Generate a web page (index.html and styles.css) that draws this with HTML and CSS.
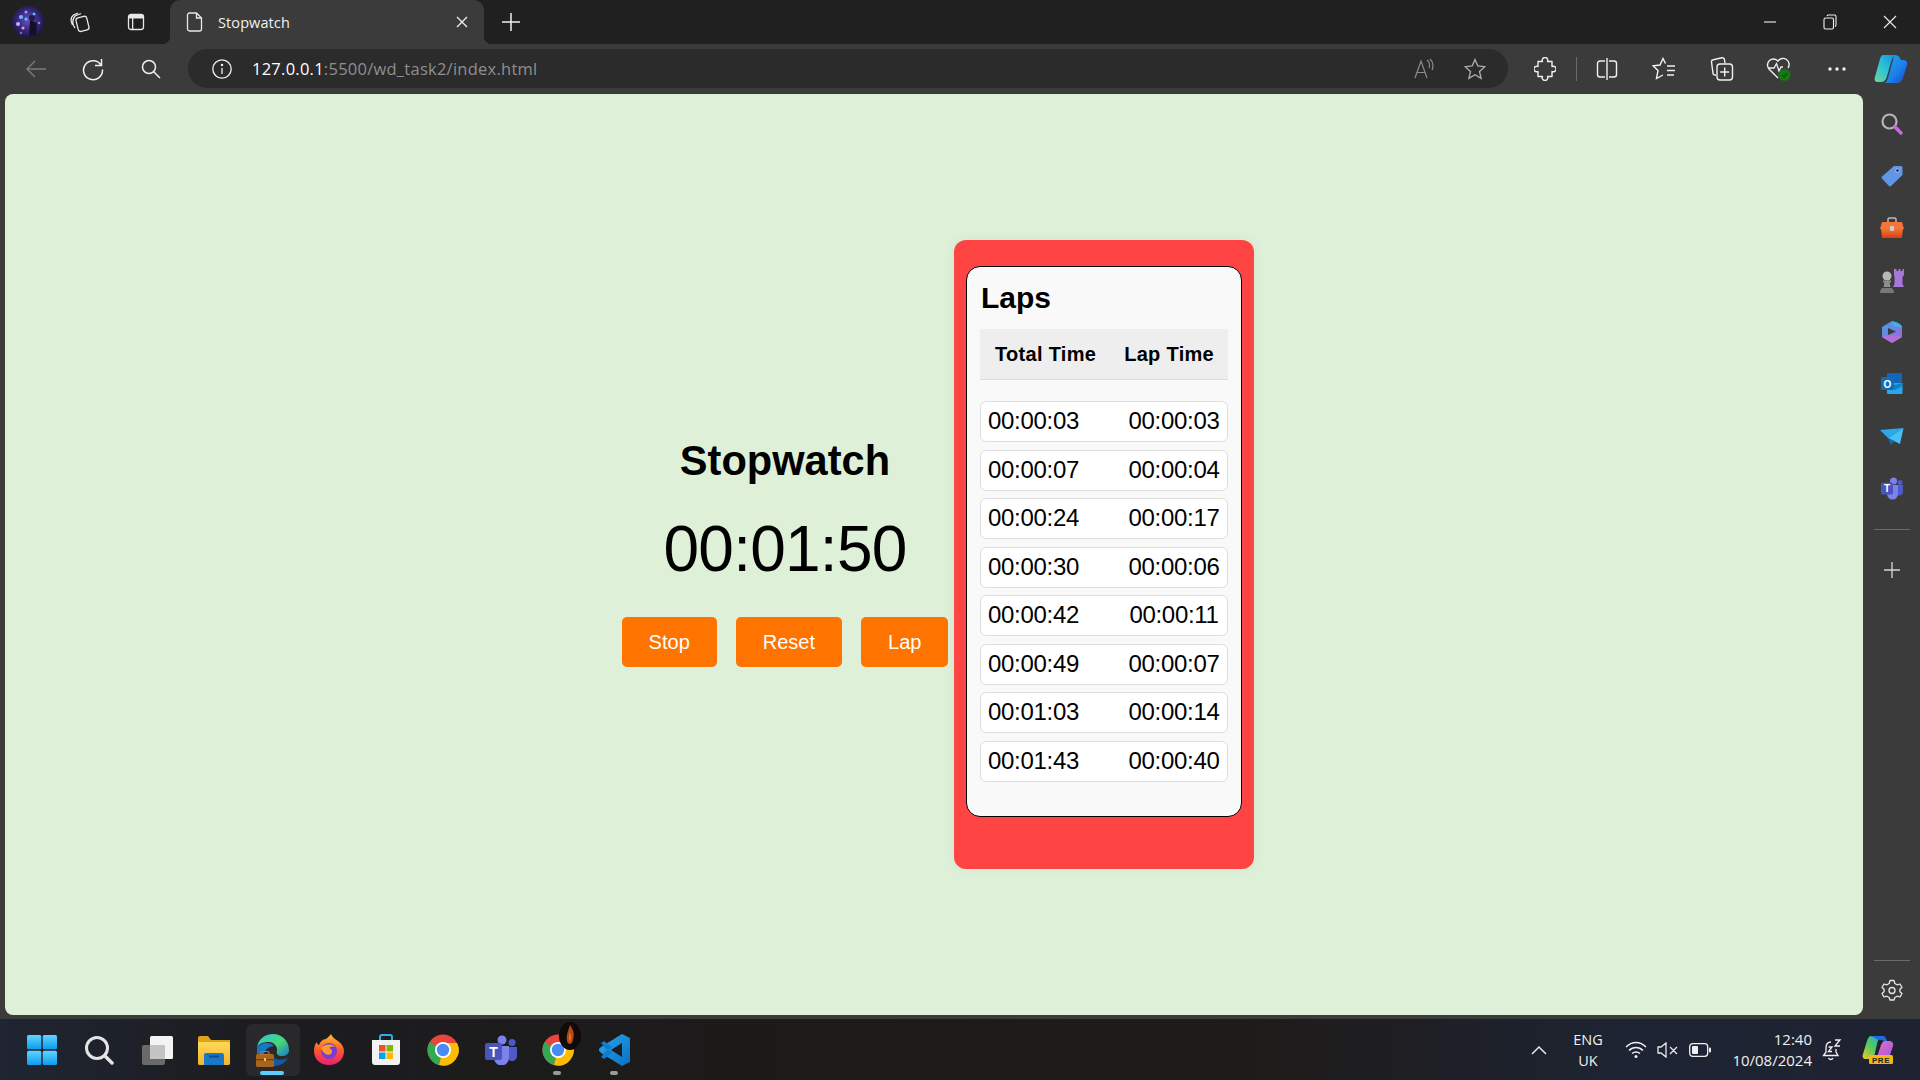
FILE: index.html
```html
<!DOCTYPE html>
<html lang="en">
<head>
<meta charset="utf-8">
<title>Stopwatch</title>
<link rel="stylesheet" href="styles.css">
</head>
<body>
<svg class="defs" width="0" height="0" aria-hidden="true">
  <defs>
    <linearGradient id="gCopA" x1="0" y1="0" x2="1" y2="1"><stop offset="0" stop-color="#1fa8f0"/><stop offset=".6" stop-color="#1b80e8"/><stop offset="1" stop-color="#1c3fc4"/></linearGradient>
    <linearGradient id="gCopB" x1="0" y1="1" x2="1" y2="0"><stop offset="0" stop-color="#6fd898"/><stop offset=".5" stop-color="#2cc0d8"/><stop offset="1" stop-color="#0f90e0"/></linearGradient>
    <linearGradient id="gCopP" x1="0" y1="0" x2="1" y2="1"><stop offset="0" stop-color="#f06ab8"/><stop offset="1" stop-color="#9a5be8"/></linearGradient>
    <linearGradient id="gCopG" x1="0" y1="1" x2="1" y2="0"><stop offset="0" stop-color="#f0c830"/><stop offset=".5" stop-color="#4fc860"/><stop offset="1" stop-color="#20a8e8"/></linearGradient>
    <linearGradient id="gWin" x1="0" y1="0" x2="0" y2="1"><stop offset="0" stop-color="#5fd6ff"/><stop offset="1" stop-color="#0f9af0"/></linearGradient>
    <linearGradient id="gEdge" x1="0" y1="0" x2="1" y2="1"><stop offset="0" stop-color="#36c0d8"/><stop offset=".55" stop-color="#46d878"/><stop offset="1" stop-color="#1a78c8"/></linearGradient>
    <linearGradient id="gFox" x1="0" y1="0" x2="0" y2="1"><stop offset="0" stop-color="#ffc02c"/><stop offset=".5" stop-color="#ff5a2c"/><stop offset="1" stop-color="#e81f70"/></linearGradient>
    <linearGradient id="gFold" x1="0" y1="0" x2="0" y2="1"><stop offset="0" stop-color="#ffd75a"/><stop offset="1" stop-color="#f2b528"/></linearGradient>
    <linearGradient id="gVs" x1="0" y1="0" x2="1" y2="1"><stop offset="0" stop-color="#2aa8ee"/><stop offset="1" stop-color="#0a70c0"/></linearGradient>
    <linearGradient id="gTool" x1="0" y1="0" x2="0" y2="1"><stop offset="0" stop-color="#f4743a"/><stop offset="1" stop-color="#d8400e"/></linearGradient>
    <linearGradient id="gM365" x1="0" y1="0" x2="1" y2="1"><stop offset="0" stop-color="#3fa0e8"/><stop offset="1" stop-color="#a860d8"/></linearGradient>
    <radialGradient id="gAv" cx=".5" cy=".45" r=".6"><stop offset="0" stop-color="#6a50c8"/><stop offset=".55" stop-color="#33287a"/><stop offset="1" stop-color="#18122e"/></radialGradient>
  </defs>
</svg>

<div class="window">
  <header class="titlebar">
    <div class="slot w56">
      <svg class="ic" width="32" height="32" viewBox="0 0 32 32"><circle cx="16" cy="16" r="16" fill="url(#gAv)"/><circle cx="9" cy="11" r="2" fill="#7fb0ff"/><circle cx="14" cy="6" r="1.500" fill="#d080e8"/><circle cx="6" cy="18" r="2" fill="#c8b0ff"/><circle cx="11" cy="22" r="1.500" fill="#e0a0d0"/><circle cx="22" cy="8" r="1.500" fill="#60c0e0"/><circle cx="9" cy="27" r="1.300" fill="#8060d0"/><circle cx="14" cy="13" r="1.500" fill="#50d0f0"/><circle cx="27" cy="17" r="1.300" fill="#9080e8"/><path d="M18 14 L25 17 L24 29 L17 30 Z" fill="#151028"/><circle cx="20" cy="12" r="3" fill="#231a48"/></svg>
    </div>
    <div class="slot w48">
      <svg class="ic" width="22" height="22" viewBox="0 0 22 22" fill="none" stroke="#e8e8e8" stroke-width="1.300"><rect x="8" y="6" width="11" height="14" rx="2.500" transform="rotate(-14 13 13)"/><path d="M6 17 C3 13 3 9 6 5 L12 2.500 M3.500 14 C1.500 10 2 6 4.500 4 L9 2"/></svg>
    </div>
    <div class="slot w63">
      <svg class="ic" width="20" height="20" viewBox="0 0 20 20"><rect x="2.500" y="2.500" width="15" height="15" rx="2.500" fill="none" stroke="#e8e8e8" stroke-width="1.300"/><path d="M2.500 5 a2.500 2.500 0 0 1 2.500-2.500 h10 a2.500 2.500 0 0 1 2.500 2.500 v1.500 h-15z M6 6 h1.300 v11 h-1.300z" fill="#e8e8e8"/></svg>
    </div>
    <div class="tab">
      <svg class="ic" width="18" height="20" viewBox="0 0 18 20" fill="none" stroke="#e8e8e8" stroke-width="1.300"><path d="M3.500 1 h7 l5 5 v11 a2 2 0 0 1-2 2 h-10 a2 2 0 0 1-2-2 v-14 a2 2 0 0 1 2-2z M10.500 1 v5 h5"/></svg>
      <span class="tab-title">Stopwatch</span>
      <svg class="ic" width="12" height="12" viewBox="0 0 12 12" stroke="#f0f0f0" stroke-width="1.300"><path d="M1 1 L11 11 M11 1 L1 11"/></svg>
    </div>
    <svg class="ic newtab" width="20" height="20" viewBox="0 0 20 20" stroke="#f0f0f0" stroke-width="1.500"><path d="M10 1 V19 M1 10 H19"/></svg>
    <div class="winctl">
      <div class="slot w60"><svg class="ic" width="14" height="14" viewBox="0 0 14 14" stroke="#f0f0f0" stroke-width="1.100"><path d="M1 7 H13"/></svg></div>
      <div class="slot w60"><svg class="ic" width="14" height="16" viewBox="0 0 14 16" fill="none" stroke="#f0f0f0" stroke-width="1.100"><rect x="1" y="4" width="9.500" height="11" rx="1.500"/><path d="M4 2 a1.500 1.500 0 0 1 1.500-1 h6 a1.500 1.500 0 0 1 1.500 1.500 v8.500 a1.500 1.500 0 0 1-1 1.400"/></svg></div>
      <div class="slot w60"><svg class="ic" width="14" height="14" viewBox="0 0 14 14" stroke="#f0f0f0" stroke-width="1.100"><path d="M1 1 L13 13 M13 1 L1 13"/></svg></div>
    </div>
  </header>

  <nav class="toolbar">
    <div class="slot w57">
      <svg class="ic" width="22" height="20" viewBox="0 0 22 20" fill="none" stroke="#7b7b7b" stroke-width="1.400"><path d="M21 10 H2 M10 2 L2 10 L10 18"/></svg>
    </div>
    <div class="slot w57">
      <svg class="ic" width="24" height="24" viewBox="0 0 24 24" fill="none" stroke="#f0f0f0" stroke-width="1.500"><path d="M20 8 A9.500 9.500 0 1 0 21.500 12.500 M20.500 2 V8.500 H14"/></svg>
    </div>
    <div class="slot w57">
      <svg class="ic" width="20" height="20" viewBox="0 0 20 20" fill="none" stroke="#f0f0f0" stroke-width="1.500"><circle cx="8" cy="8" r="6.500"/><path d="M12.500 12.500 L19 19"/></svg>
    </div>
    <div class="address">
      <svg class="ic" width="20" height="20" viewBox="0 0 20 20" fill="none" stroke="#f0f0f0" stroke-width="1.300"><circle cx="10" cy="10" r="9.200"/><path d="M10 9 V15"/><circle cx="10" cy="6" r=".6" fill="#f0f0f0"/></svg>
      <span class="url"><span class="host">127.0.0.1</span>:5500/wd_task2/index.html</span>
      <svg class="ic" width="22" height="22" viewBox="0 0 22 22" fill="none" stroke="#8c8c8c" stroke-width="1.200"><path d="M2 20 L8 3 L14 20 M4 14.500 H12 M14 2 C17 4 17 8 16 10 M17 1 C20.500 4 20.500 9 19 12"/></svg>
      <svg class="ic" width="22" height="22" viewBox="0 0 22 22" fill="none" stroke="#b0b0b0" stroke-width="1.300"><path d="M11 1.500 L13.800 8 L20.800 8.700 L15.500 13.400 L17.100 20.300 L11 16.700 L4.900 20.300 L6.500 13.400 L1.200 8.700 L8.200 8Z"/></svg>
    </div>
    <div class="tools">
      <div class="slot w57">
        <svg class="ic" width="22" height="24" viewBox="0 0 22 24" fill="none" stroke="#f0f0f0" stroke-width="1.400" stroke-linejoin="round"><path d="M8.500 4.500 a2.800 2.800 0 1 1 5 0 H18 V9.500 a2.800 2.800 0 1 1 0 5 V19.500 H13.500 a2.800 2.800 0 1 1-5 0 H4 V14.500 a2.800 2.800 0 1 1 0-5 V4.500Z"/></svg>
      </div>
      <span class="tool-sep"></span>
      <div class="slot w57">
        <svg class="ic" width="22" height="24" viewBox="0 0 22 24" fill="none" stroke="#f0f0f0" stroke-width="1.400"><path d="M9 4 H4 a2.500 2.500 0 0 0-2.500 2.500 v11 A2.500 2.500 0 0 0 4 20 h5 M13 4 h5 a2.500 2.500 0 0 1 2.500 2.500 v11 a2.500 2.500 0 0 1-2.500 2.500 h-5 M11 1 V23"/></svg>
      </div>
      <div class="slot w57">
        <svg class="ic" width="24" height="24" viewBox="0 0 24 24" fill="none" stroke="#f0f0f0" stroke-width="1.400"><path d="M13.500 6.500 L11 1.500 L8 8 L1 8.800 L6 13.500 L4.500 21.500 L11 18 M15 9 H23 M15 13.500 H23 M15 18 H22"/></svg>
      </div>
      <div class="slot w57">
        <svg class="ic" width="24" height="26" viewBox="0 0 24 26" fill="none" stroke="#f0f0f0" stroke-width="1.400"><path d="M6 19 H5 a2 2 0 0 1-2-1.700 L1.500 6 a2 2 0 0 1 1.700-2.300 L12 1.800 a2 2 0 0 1 2.400 1.700 L15 7"/><rect x="7" y="8" width="15.500" height="16" rx="3"/><path d="M14.700 11.500 V20.500 M10.200 16 H19.200"/></svg>
      </div>
      <div class="slot w57">
        <svg class="ic" width="26" height="26" viewBox="0 0 26 26"><path d="M12 22 L3 13 a6 6 0 0 1 9-8 a6 6 0 0 1 10 7" fill="none" stroke="#f0f0f0" stroke-width="1.400"/><path d="M3 12 H8 L10.500 7.500 L13 15 L15 11 H17" fill="none" stroke="#f0f0f0" stroke-width="1.300"/><circle cx="18.500" cy="19" r="6" fill="#107c10"/><path d="M16 19 L18 21 L21 17.500" fill="none" stroke="#0c4f0c" stroke-width="1.300"/></svg>
      </div>
      <div class="slot w57">
        <svg class="ic" width="18" height="4" viewBox="0 0 18 4" fill="#f0f0f0"><circle cx="2" cy="2" r="1.700"/><circle cx="9" cy="2" r="1.700"/><circle cx="16" cy="2" r="1.700"/></svg>
      </div>
      <div class="slot w57 copilot-slot">
        <svg class="ic" width="34" height="30" viewBox="0 0 34 30"><path d="M20 1 C24 1 26 3 27 6 H29 C32 6 34 8 33 11 L29 24 C28 27 26 29 23 29 H9 C12 29 13 27 14 24 L19 6Z" fill="url(#gCopA)"/><path d="M9 1 H22 C19 2 18 5 17 8 L13 22 C12 26 10 28 7 28 H4 C1 28 0 26 1 23 L6 5 C7 2 8 1 9 1Z" fill="url(#gCopB)"/></svg>
      </div>
    </div>
  </nav>

  <div class="middle">
    <main class="page">
      <section class="stopwatch">
        <h1 class="sw-title">Stopwatch</h1>
        <div class="sw-time">00:01:50</div>
        <div class="sw-buttons">
          <button class="btn">Stop</button>
          <button class="btn">Reset</button>
          <button class="btn">Lap</button>
        </div>
      </section>
      <section class="panel">
        <div class="card">
          <h2 class="laps-title">Laps</h2>
          <div class="laps-head"><span class="head-total">Total Time</span><span class="head-lap">Lap Time</span></div>
          <div class="laps-list">
            <div class="lap-row"><span>00:00:03</span><span class="lap-cell">00:00:03</span></div>
            <div class="lap-row"><span>00:00:07</span><span class="lap-cell">00:00:04</span></div>
            <div class="lap-row"><span>00:00:24</span><span class="lap-cell">00:00:17</span></div>
            <div class="lap-row"><span>00:00:30</span><span class="lap-cell">00:00:06</span></div>
            <div class="lap-row"><span>00:00:42</span><span class="lap-cell">00:00:11</span></div>
            <div class="lap-row"><span>00:00:49</span><span class="lap-cell">00:00:07</span></div>
            <div class="lap-row"><span>00:01:03</span><span class="lap-cell">00:00:14</span></div>
            <div class="lap-row"><span>00:01:43</span><span class="lap-cell">00:00:40</span></div>
          </div>
        </div>
      </section>
    </main>
    <aside class="sidebar">
      <div class="side-icon"><svg class="ic" width="24" height="24" viewBox="0 0 24 24" fill="none"><circle cx="9.500" cy="9.500" r="7" stroke="#b4b4b4" stroke-width="2.200"/><path d="M15 15 L21 21" stroke="#c070d8" stroke-width="3.500" stroke-linecap="round"/></svg></div>
      <div class="side-icon"><svg class="ic" width="24" height="24" viewBox="0 0 24 24"><path d="M14 2 H21 a1.500 1.500 0 0 1 1.500 1.500 V11 L11 22 a1.500 1.500 0 0 1-2 0 L2 14.500 a1.500 1.500 0 0 1 0-2z" fill="#5f96e8"/><circle cx="17.500" cy="6.500" r="1.800" fill="#1e2a50" stroke="#dde" stroke-width=".7"/></svg></div>
      <div class="side-icon"><svg class="ic" width="26" height="24" viewBox="0 0 26 24"><path d="M9 6 V3.500 a1.500 1.500 0 0 1 1.500-1.500 h5 a1.500 1.500 0 0 1 1.500 1.500 V6" fill="none" stroke="#bbb" stroke-width="1.500"/><path d="M3 6 H23 L25 13 H1Z" fill="#f4743a"/><path d="M2 13 H24 L23 21 a1 1 0 0 1-1 1 H4 a1 1 0 0 1-1-1Z" fill="url(#gTool)"/><rect x="11" y="10" width="4" height="5" rx="1" fill="#ccc"/></svg></div>
      <div class="side-icon"><svg class="ic" width="26" height="26" viewBox="0 0 26 26"><path d="M15 2 h2.500 v2 h2 V2 h2 v2 h2 V2 H25 v6 l-1.500 2 V17 L25 20 H14 L15.500 17 V10 L15 8Z" fill="#a877d8"/><circle cx="8" cy="9" r="4.500" fill="#b8b8b8"/><path d="M4 13.500 H12 V15.500 H10.500 L11.500 20 H4.500 L5.500 15.500 H4Z" fill="#8f8f8f"/><path d="M1 26 C1 22 3 21 4 21 H12 C13 21 15 22 15 26Z" fill="#777"/></svg></div>
      <div class="side-icon"><svg class="ic" width="24" height="24" viewBox="0 0 24 24"><path d="M12 1 L22 6 V17 L12 23 L2 17 V7Z" fill="url(#gM365)"/><path d="M12 1 C17 2 22 4 22 8 L13 6Z" fill="#40b0e8"/><path d="M2 17 C6 15 16 15 22 17 L12 23Z" fill="#b070d8"/><path d="M8 8 L16 11.500 L8 15Z" fill="#3b3b3b"/></svg></div>
      <div class="side-icon"><svg class="ic" width="24" height="24" viewBox="0 0 24 24"><rect x="7" y="1" width="15" height="11" rx="1" fill="#1066b8"/><path d="M7 11 H22.500 V21 a1 1 0 0 1-1 1 H8 a1 1 0 0 1-1-1Z" fill="#28a8ea"/><path d="M10 14 L22.500 11 V14 L15 18Z" fill="#0f80c8"/><rect x="1" y="5" width="13" height="13" rx="1" fill="#0f6cbd"/><text class="logo-letter" x="7.500" y="15.500" text-anchor="middle">O</text></svg></div>
      <div class="side-icon"><svg class="ic" width="24" height="22" viewBox="0 0 24 22"><path d="M0 5 L23.500 3 L8 13Z" fill="#2aa8ee"/><path d="M8 13 L23.500 3 L20 19 Z" fill="#48c0f4"/><path d="M8 13 L11 20 L14 16Z" fill="#0c70c0"/></svg></div>
      <div class="side-icon"><svg class="ic" width="24" height="24" viewBox="0 0 24 24"><circle cx="13.500" cy="5" r="3.500" fill="#7b83eb"/><circle cx="20" cy="6.500" r="2.500" fill="#5059c9"/><path d="M15 9 H23 V16 a4 4 0 0 1-6 3Z" fill="#5059c9"/><path d="M7 9 H18 V18 a5.500 5.500 0 0 1-11 0Z" fill="#7b83eb"/><rect x="1" y="6.500" width="12" height="12" rx="1.500" fill="#4b53bc"/><text class="logo-letter" x="7" y="16.300" text-anchor="middle">T</text></svg></div>
      <span class="side-sep"></span>
      <div class="side-icon plus"><svg class="ic" width="16" height="16" viewBox="0 0 16 16" stroke="#d8d8d8" stroke-width="1.300"><path d="M8 0 V16 M0 8 H16"/></svg></div>
      <span class="side-sep bottom"></span>
      <div class="side-icon gear"><svg class="ic" width="22" height="22" viewBox="0 0 22 22" fill="none" stroke="#e8e8e8" stroke-width="1.300"><path d="M9 1.500 H13 L13.800 4.500 L16.200 5.800 L19 5 L21 8.500 L18.900 10.200 V12.800 L21 14.500 L19 18 L16.200 17.200 L13.800 18.500 L13 21 H9 L8.200 18.500 L5.800 17.200 L3 18 L1 14.500 L3.100 12.800 V10.200 L1 8.500 L3 5 L5.800 5.800 L8.200 4.500Z" stroke-linejoin="round"/><circle cx="11" cy="11.500" r="3"/></svg></div>
    </aside>
  </div>

  <footer class="taskbar">
    <div class="pinned">
      <div class="task"><svg class="ic" width="30" height="30" viewBox="0 0 30 30" fill="url(#gWin)"><rect x="0" y="0" width="14.300" height="14.300" rx="1.500"/><rect x="15.700" y="0" width="14.300" height="14.300" rx="1.500"/><rect x="0" y="15.700" width="14.300" height="14.300" rx="1.500"/><rect x="15.700" y="15.700" width="14.300" height="14.300" rx="1.500"/></svg></div>
      <div class="task"><svg class="ic" width="30" height="30" viewBox="0 0 30 30" fill="none" stroke="#e4e4e4"><circle cx="13" cy="13" r="10.500" stroke-width="3"/><path d="M21 21 L28 28" stroke-width="3.500" stroke-linecap="round"/></svg></div>
      <div class="task"><svg class="ic" width="32" height="30" viewBox="0 0 32 30"><rect x="1" y="10" width="23" height="20" rx="2" fill="#6a6a6a"/><rect x="9" y="1" width="23" height="23" rx="1.500" fill="#f4f4f4"/><rect x="9" y="10" width="15" height="14" fill="#c4c4c4"/></svg></div>
      <div class="task"><svg class="ic" width="32" height="30" viewBox="0 0 32 30"><path d="M0 3 a2 2 0 0 1 2-2 H10 L13 5 H32 V28 a2 2 0 0 1-2 2 H2 a2 2 0 0 1-2-2Z" fill="#e0a318"/><path d="M0 7 H30 a2 2 0 0 1 2 2 V28 a2 2 0 0 1-2 2 H2 a2 2 0 0 1-2-2Z" fill="url(#gFold)"/><path d="M6 30 V20 a2 2 0 0 1 2-2 H24 a2 2 0 0 1 2 2 V30Z" fill="#1a78c8"/><rect x="11" y="20.500" width="10" height="2" fill="#0c4a88"/></svg></div>
      <div class="task active">
        <svg class="ic" width="34" height="34" viewBox="0 0 34 34"><path d="M1 15 C2 6 9 1 17 1 C26 1 33 8 33 17 C33 21 30 23 26 23 C22 23 20 21 21 18 C22 14 18 9 13 9 C7 9 2 11 1 15Z" fill="url(#gEdge)"/><path d="M1 15 C4 10 14 8 18 13 C14 13 9 16 8 21 H1Z" fill="#1676c8"/><path d="M18 33 C24 33 29 30 32 25 C27 27 22 27 18 25Z" fill="#1458a8"/><rect x="0" y="21" width="18" height="13" rx="1.500" fill="#a8651c"/><rect x="5" y="18.500" width="8" height="3" rx="1" fill="none" stroke="#b87830" stroke-width="1.200"/><rect x="0" y="26" width="18" height="1.200" fill="#6e3f10"/><rect x="8" y="25" width="2" height="3" fill="#f0c070"/></svg>
        <span class="active-bar"></span>
      </div>
      <div class="task"><svg class="ic" width="32" height="32" viewBox="0 0 32 32"><path d="M16 31 C7 31 1 25 1 17 C1 13 2 10 4 8 C4 10 5 11 6 11 C7 8 10 5 13 5 C15 3 17 2 18 0 C19 3 22 5 25 7 C29 10 31 13 31 17 C31 25 25 31 16 31Z" fill="url(#gFox)"/><circle cx="16" cy="17" r="8" fill="#7a3cd0"/><path d="M8 14 C11 10 18 9 23 13 C20 12 17 13 16 14 C19 15 20 18 18 20 C15 22 10 20 8 14Z" fill="#ff9a2c"/></svg></div>
      <div class="task"><svg class="ic" width="30" height="32" viewBox="0 0 30 32"><path d="M9 7 V3 a2 2 0 0 1 2-2 H19 a2 2 0 0 1 2 2 V7" fill="none" stroke="#2ab0e8" stroke-width="2"/><path d="M1 6 H29 V28 a3 3 0 0 1-3 3 H4 a3 3 0 0 1-3-3Z" fill="#f2f2f2"/><rect x="8" y="11" width="6.500" height="6.500" fill="#f25022"/><rect x="15.500" y="11" width="6.500" height="6.500" fill="#7fba00"/><rect x="8" y="18.500" width="6.500" height="6.500" fill="#00a4ef"/><rect x="15.500" y="18.500" width="6.500" height="6.500" fill="#ffb900"/></svg></div>
      <div class="task"><svg class="ic" width="32" height="32" viewBox="0 0 32 32"><circle cx="16" cy="16" r="15.500" fill="#e8453c"/><path d="M16 16 L2.600 8 A15.500 15.500 0 0 0 12 31 Z" fill="#34a853"/><path d="M16 16 L12 31 A15.500 15.500 0 0 0 30 9 H16Z" fill="#fbbc05"/><circle cx="16" cy="16" r="8" fill="#fff"/><circle cx="16" cy="16" r="6.200" fill="#4a8af4"/></svg></div>
      <div class="task"><svg class="ic" width="32" height="30" viewBox="0 0 32 30"><circle cx="17" cy="5" r="4.500" fill="#7b83eb"/><circle cx="27" cy="7.500" r="3.500" fill="#5059c9"/><path d="M22 12 H32 V21 a5 5 0 0 1-8 4Z" fill="#5059c9"/><path d="M9 11 H24 V23 a7 7 0 0 1-15 0Z" fill="#7b83eb"/><rect x="0" y="8" width="17" height="17" rx="2" fill="#4b53bc"/><text class="logo-letter big" x="8.500" y="21.500" text-anchor="middle">T</text></svg></div>
      <div class="task">
        <svg class="ic" width="32" height="32" viewBox="0 0 32 32"><circle cx="16" cy="16" r="15.500" fill="#e8453c"/><path d="M16 16 L2.600 8 A15.500 15.500 0 0 0 12 31 Z" fill="#34a853"/><path d="M16 16 L12 31 A15.500 15.500 0 0 0 30 9 H16Z" fill="#fbbc05"/><circle cx="16" cy="16" r="8" fill="#fff"/><circle cx="16" cy="16" r="6.200" fill="#4a8af4"/></svg>
        <svg class="chrome-badge" width="24" height="30" viewBox="0 0 24 30"><ellipse cx="12" cy="15" rx="11" ry="14" fill="#120a08"/><path d="M12 4 C15 9 17 12 15 19 C14 24 10 24 9 20 C8 15 10 10 12 4Z" fill="#b8481c"/><path d="M12 11 C13 15 13 18 12 21 C11 18 11 15 12 11Z" fill="#e89038"/></svg>
        <span class="run-dot"></span>
      </div>
      <div class="task">
        <svg class="ic" width="32" height="34" viewBox="0 0 32 34"><path d="M23 1 L31 5 V29 L23 33 L2 20 L0 17.500 L0 16 L2 14Z" fill="url(#gVs)"/><path d="M23 10 L12 17 L23 24Z" fill="#1e1e22"/><path d="M2 10 L5 8 L13 14 L9 18Z M2 24 L5 26 L13 20 L9 16Z" fill="#0f7ccc"/></svg>
        <span class="run-dot"></span>
      </div>
    </div>
    <div class="tray">
      <svg class="ic chev" width="16" height="10" viewBox="0 0 16 10" fill="none" stroke="#e8e8e8" stroke-width="1.500"><path d="M1 9 L8 2 L15 9"/></svg>
      <div class="lang"><span>ENG</span><span>UK</span></div>
      <svg class="ic wifi" width="22" height="18" viewBox="0 0 22 18" fill="none" stroke="#f0f0f0" stroke-width="1.500"><path d="M1 6 C7 0 15 0 21 6 M4 9.500 C8 5.500 14 5.500 18 9.500 M7 12.500 C9.500 10.500 12.500 10.500 15 12.500"/><circle cx="11" cy="15.500" r="1.500" fill="#f0f0f0" stroke="none"/></svg>
      <svg class="ic mute" width="22" height="16" viewBox="0 0 22 16" fill="none" stroke="#e8e8e8" stroke-width="1.300"><path d="M1 5 H4 L9 1 V15 L4 11 H1Z M13 5 L20 12 M20 5 L13 12"/></svg>
      <svg class="ic batt" width="22" height="14" viewBox="0 0 22 14"><rect x=".7" y=".7" width="18" height="12.600" rx="3" fill="none" stroke="#f0f0f0" stroke-width="1.300"/><rect x="3" y="3" width="6" height="8" rx="1" fill="#f0f0f0"/><rect x="20" y="4.500" width="2" height="5" rx="1" fill="#f0f0f0"/></svg>
      <div class="clock"><span>12:40</span><span>10/08/2024</span></div>
      <svg class="ic bell" width="20" height="22" viewBox="0 0 20 22" fill="none" stroke="#f0f0f0" stroke-width="1.300"><path d="M9 3 C5 3 4 6 4 9 V13 L1.500 16.500 H16 L14 13 V10 M6.500 19 C7.500 21 10 21 11 19 M6.500 8 H10 L6.500 12.500 H10 M13 1 H18 L13 7 H18"/></svg>
      <svg class="ic tray-copilot" width="32" height="30" viewBox="0 0 32 30"><path d="M9 1 H21 C17 2 16 5 15 9 L13 18 C12 22 10 24 6 24 H4 C1 24 0 22 1 19 L5 6 C6 3 7 1 9 1Z" fill="url(#gCopG)"/><path d="M23 6 H27 C30 6 32 8 31 11 L28 20 C27 23 25 25 22 25 H12 C15 24 15 22 16 19 L19 10 C20 8 21 6 23 6Z" fill="url(#gCopP)"/><path d="M9 1 H21 C23 1 24 3 25 6 H23 C20 6 20 4 16 5Z" fill="#1b70e0"/><rect x="7" y="20" width="24" height="9" rx="1.500" fill="#f2b90f"/><text class="pre" x="19" y="27.500" text-anchor="middle">PRE</text></svg>
    </div>
  </footer>
</div>
</body>
</html>
```

FILE: styles.css
```css
* { box-sizing: border-box; }
html, body { margin: 0; padding: 0; height: 100%; overflow: hidden; }
body { font-family: "Liberation Sans", Arial, sans-serif; background: #3b3b3b; }
.defs { position: absolute; }
.ic { display: block; flex: none; }

.window { width: 1920px; height: 1080px; display: flex; flex-direction: column; }
.slot { display: flex; align-items: center; justify-content: center; flex: none; }
.w56 { width: 56px; }
.w48 { width: 48px; }
.w63 { width: 63px; }
.w60 { width: 60px; }
.w57 { width: 57.5px; }

/* title bar */
.titlebar { height: 44px; background: #202020; display: flex; align-items: center; flex: none; }
.tab { position: relative; margin-left: 3px; width: 314px; height: 44px; background: #3b3b3b; border-radius: 10px 10px 0 0; display: flex; align-items: center; padding: 0 16px; color: #f0f0f0; font: 14.500px "Open Sans", sans-serif; }
.tab::before, .tab::after { content: ""; position: absolute; bottom: 0; width: 8px; height: 8px; }
.tab::before { left: -8px; background: radial-gradient(circle at 0 0, #202020 8px, #3b3b3b 8.500px); }
.tab::after { right: -8px; background: radial-gradient(circle at 100% 0, #202020 8px, #3b3b3b 8.500px); }
.tab-title { flex: 1; margin-left: 14px; letter-spacing: .1px; }
.newtab { margin-left: 17px; }
.winctl { margin-left: auto; display: flex; }

/* toolbar */
.toolbar { height: 50px; background: #3b3b3b; display: flex; align-items: center; padding-left: 7px; flex: none; }
.address { margin-left: 8.500px; flex: 1; height: 39px; margin-top: -1px; background: #2b2b2b; border-radius: 20px; display: flex; align-items: center; padding: 0 22px 0 24px; gap: 29px; color: #8f8f8f; font: 16.500px "Open Sans", sans-serif; }
.url { flex: 1; margin-left: -9px; letter-spacing: .25px; }
.host { color: #fff; }
.tools { width: 412px; flex: none; display: flex; align-items: center; padding-left: 8px; }
.tool-sep { width: 1px; height: 24px; margin: 0 2px; background: #6a6a6a; }
.copilot-slot { margin-left: -3px; }

/* middle */
.middle { flex: 1; display: flex; min-height: 0; padding-left: 5px; }
.page { flex: 1; margin-bottom: 4px; background: #dff0d8; border-radius: 8px; display: flex; align-items: center; justify-content: center; padding-left: 8px; color: #000; }
.stopwatch { width: 326px; margin-right: 6px; display: flex; flex-direction: column; align-items: center; }
.sw-title { margin: 0; font-size: 41.600px; line-height: 38px; font-weight: 700; }
.sw-time { margin-top: 32px; font-size: 64px; line-height: 74px; letter-spacing: -.75px; }
.sw-buttons { margin-top: 31px; display: flex; gap: 19px; justify-content: space-between; }
.btn { height: 50px; padding: 0 27px; border: 0; border-radius: 5px; background: #ff7300; color: #fff; font: 20px "Liberation Sans", Arial, sans-serif; }

.panel { width: 300px; height: 629px; background: #ff4444; border-radius: 12px; padding: 26px 12px 52px; box-shadow: 0 0 12px rgba(0,0,0,.05); }
.card { height: 100%; background: #f9f9f9; border: 1px solid #000; border-radius: 14px; padding: 0 13px; }
.laps-title { margin: 0; padding: 10px 0 0 1px; font-size: 30px; line-height: 42px; font-weight: 700; height: 62px; }
.laps-head { height: 51px; background: #eee; border-bottom: 1px solid #ddd; display: flex; align-items: center; font-size: 20px; font-weight: 700; padding-top: 1px; letter-spacing: .3px; }
.head-total { margin-left: 15px; }
.head-lap { margin-left: 28px; }
.laps-list { margin-top: 21px; display: flex; flex-direction: column; gap: 7.500px; }
.lap-row { height: 41px; background: #fff; border: 1px solid #ddd; border-radius: 6px; display: flex; align-items: center; justify-content: space-between; padding: 0 7px 1px; font-size: 24px; letter-spacing: -.3px; }
.lap-cell { width: 92px; text-align: center; }

/* sidebar */
.sidebar { width: 57px; flex: none; display: flex; flex-direction: column; align-items: center; padding-top: 4px; }
.side-icon { height: 52px; width: 100%; display: flex; align-items: center; justify-content: center; flex: none; }
.side-sep { width: 36px; height: 1px; background: #6a6a6a; margin-top: 15px; flex: none; }
.side-icon.plus { margin-top: 14px; }
.side-sep.bottom { margin-top: auto; }
.side-icon.gear { height: 58px; }
.logo-letter { font: 700 10px "Liberation Sans", Arial, sans-serif; fill: #fff; }
.logo-letter.big { font-size: 14px; }
.pre { font: 700 8px "Liberation Sans", Arial, sans-serif; fill: #222; letter-spacing: .5px; }

/* taskbar */
.taskbar { height: 61px; flex: none; background: linear-gradient(90deg, #1f2531 0%, #1c1c1f 14%, #1d1a18 45%, #1f1b19 65%, #1d2433 85%, #1f2230 100%); display: flex; align-items: center; justify-content: space-between; padding-left: 13.500px; color: #f0f0f0; font-family: "Open Sans", sans-serif; }
.pinned { display: flex; align-items: center; }
.task { position: relative; width: 57.300px; height: 52px; display: flex; align-items: center; justify-content: center; }
.task.active { background: rgba(255,255,255,.06); border-radius: 6px; width: 54px; margin-left: 3.300px; }
.active-bar { position: absolute; left: 14px; bottom: 1px; width: 24px; height: 4px; border-radius: 2px; background: #60cdff; }
.run-dot { position: absolute; left: 24px; bottom: 1px; width: 8px; height: 4px; border-radius: 2px; background: #9a9a9a; }
.chrome-badge { position: absolute; left: 29px; top: -3px; }
.tray { display: flex; align-items: center; }
.chev { margin-right: 19px; }
.lang { display: flex; flex-direction: column; align-items: center; width: 44px; font-size: 14.500px; line-height: 21px; margin-right: 15px; }
.wifi { margin-right: 10px; }
.mute { margin-right: 10px; }
.batt { margin-right: 18px; }
.clock { width: 83px; display: flex; flex-direction: column; align-items: flex-end; font-size: 15px; line-height: 21px; margin-right: 10px; }
.bell { margin-right: 20px; }
.tray-copilot { margin-right: 26px; }
```
